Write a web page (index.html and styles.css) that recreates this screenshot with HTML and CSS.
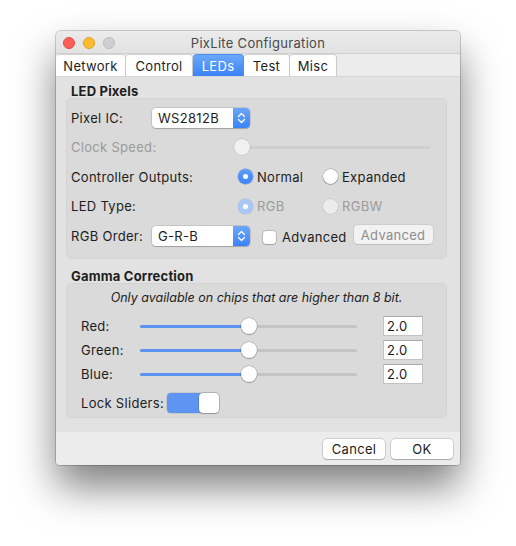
FILE: index.html
```html
<!DOCTYPE html>
<html>
<head>
<meta charset="utf-8">
<title>PixLite Configuration</title>
<link rel="stylesheet" href="styles.css">
</head>
<body>
<div class="window">
  <div class="titlebar">
    <div class="lights">
      <span class="light red"></span>
      <span class="light yellow"></span>
      <span class="light gray"></span>
    </div>
    <div class="title">PixLite Configuration</div>
    <div></div>
  </div>
  <div class="tabs">
    <div class="tab tab-network">Network</div>
    <div class="tab tab-control">Control</div>
    <div class="tab tab-leds active">LEDs</div>
    <div class="tab tab-test">Test</div>
    <div class="tab tab-misc">Misc</div>
  </div>
  <div class="content">
    <div class="group-title first">LED Pixels</div>
    <div class="box box-pixels">
      <div class="row">
        <div class="lbl lbl-short">Pixel IC:</div>
        <div class="popup"><span class="popup-text">WS2812B</span><span class="stepper"><svg width="17" height="20" viewBox="0 0 17 20"><path d="M5.5 8.5 L8.5 5.5 L11.5 8.5 M5.5 11.5 L8.5 14.5 L11.5 11.5" fill="none" stroke="#fff" stroke-width="1.3" stroke-linecap="round" stroke-linejoin="round"/></svg></span></div>
      </div>
      <div class="row">
        <div class="lbl lbl-clock disabled">Clock Speed:</div>
        <div class="slider slider-clock">
          <div class="track"></div>
          <div class="knob knob-disabled"></div>
        </div>
      </div>
      <div class="row">
        <div class="lbl lbl-long">Controller Outputs:</div>
        <div class="opt"><span class="radio on"></span><span>Normal</span></div>
        <div class="opt"><span class="radio"></span><span>Expanded</span></div>
      </div>
      <div class="row">
        <div class="lbl lbl-long">LED Type:</div>
        <div class="opt disabled"><span class="radio on dim"></span><span>RGB</span></div>
        <div class="opt disabled"><span class="radio dim"></span><span>RGBW</span></div>
      </div>
      <div class="row">
        <div class="lbl lbl-short">RGB Order:</div>
        <div class="popup"><span class="popup-text">G-R-B</span><span class="stepper"><svg width="17" height="20" viewBox="0 0 17 20"><path d="M5.5 8.5 L8.5 5.5 L11.5 8.5 M5.5 11.5 L8.5 14.5 L11.5 11.5" fill="none" stroke="#fff" stroke-width="1.3" stroke-linecap="round" stroke-linejoin="round"/></svg></span></div>
        <div class="check-wrap"><span class="checkbox"></span><span>Advanced</span></div>
        <div class="button button-disabled">Advanced</div>
      </div>
    </div>

    <div class="group-title second">Gamma Correction</div>
    <div class="box box-gamma">
      <div class="note">Only available on chips that are higher than 8 bit.</div>
      <div class="grow first-grow">
        <div class="glbl">Red:</div>
        <div class="slider slider-gamma">
          <div class="track"><div class="fill" style="width:50%"></div></div>
          <div class="knob" style="left:50%"></div>
        </div>
        <div class="field">2.0</div>
      </div>
      <div class="grow">
        <div class="glbl">Green:</div>
        <div class="slider slider-gamma">
          <div class="track"><div class="fill" style="width:50%"></div></div>
          <div class="knob" style="left:50%"></div>
        </div>
        <div class="field">2.0</div>
      </div>
      <div class="grow">
        <div class="glbl">Blue:</div>
        <div class="slider slider-gamma">
          <div class="track"><div class="fill" style="width:50%"></div></div>
          <div class="knob" style="left:50%"></div>
        </div>
        <div class="field">2.0</div>
      </div>
      <div class="lock-row">
        <div class="lock-lbl">Lock Sliders:</div>
        <div class="switch"><span class="switch-on"></span><span class="switch-knob"></span></div>
      </div>
    </div>
  </div>
  <div class="bottombar">
    <div class="button btn-cancel">Cancel</div>
    <div class="button btn-ok">OK</div>
  </div>
</div>
</body>
</html>
```

FILE: styles.css
```css
* { box-sizing: border-box; }
html, body { margin: 0; background: #fff; }
body {
  width: 516px;
  height: 546px;
  padding: 31px 0 0 56px;
  font-family: Inter, "Liberation Sans", sans-serif;
  font-size: 13px;
  letter-spacing: 0.3px;
  color: #1d1d1d;
  overflow: hidden;
}
.window {
  width: 404px;
  height: 434px;
  border-radius: 5px 5px 4px 4px;
  background: #ececec;
  box-shadow: 0 0 0 1px rgba(0,0,0,0.18), 0 22px 40px rgba(0,0,0,0.5);
  display: flex;
  flex-direction: column;
  overflow: hidden;
}
.titlebar {
  height: 23px;
  flex: none;
  display: grid;
  grid-template-columns: 1fr auto 1fr;
  align-items: center;
  padding-top: 1px;
  background: linear-gradient(#ebebeb, #e2e2e2);
  border-bottom: 1px solid #cfcfcf;
}
.lights { display: flex; gap: 8px; padding-left: 7px; }
.light { width: 12px; height: 12px; border-radius: 50%; }
.red { background: #fc5f57; border: 0.5px solid #de4a42; }
.yellow { background: #fdbc2e; border: 0.5px solid #dea123; }
.gray { background: #cfcfcf; border: 0.5px solid #bcbcbc; }
.title { color: #4a4a4a; font-size: 13px; }

.tabs {
  height: 23px;
  flex: none;
  display: flex;
  align-items: stretch;
  background: #ececec;
  border-bottom: 1px solid #d6d6d6;
}
.tab {
  background: #fff;
  display: flex;
  align-items: center;
  justify-content: center;
  padding-top: 1px;
  border-right: 1px solid #c9c9c9;
  border-top: 1px solid #d3d3d3;
  border-radius: 4px 4px 0 0;
  color: #1d1d1d;
}
.tab-network { width: 70px; }
.tab-control { width: 67px; }
.tab-leds { width: 51px; }
.tab-test { width: 46px; }
.tab-misc { width: 47px; }
.tab.active {
  background: linear-gradient(#6aa8fa, #3b83f6);
  color: #fff;
  border-color: #4b8ef4;
}

.content {
  flex: 1;
  background: #e2e2e2;
  padding: 0 13px 0 10px;
}
.group-title {
  font-weight: 700;
  line-height: 14px;
  height: 14px;
  padding-left: 5px;
  letter-spacing: 0.2px;
}
.group-title.first { margin-top: 7px; }
.group-title.second { margin-top: 10px; }
.box {
  background: #dadada;
  border: 1px solid #d3d3d3;
  border-radius: 5px;
}
.box-pixels {
  height: 161px;
  padding: 4px 4px 0 4px;
}
.row {
  height: 29.5px;
  display: flex;
  align-items: center;
}
.lbl { flex: none; }
.lbl-short { width: 81px; }
.lbl-clock { width: 163px; }
.lbl-long { width: 167px; }
.disabled { color: #9b9b9b; }

.popup {
  width: 98px;
  height: 20px;
  flex: none;
  background: #fff;
  border-radius: 4px;
  box-shadow: 0 0 0 0.5px rgba(0,0,0,0.2), 0 1px 1px rgba(0,0,0,0.18);
  display: flex;
  align-items: center;
  justify-content: space-between;
  overflow: hidden;
}
.popup-text { padding-left: 6px; }
.stepper {
  width: 17px;
  height: 20px;
  background: linear-gradient(#6ba7fa, #3a83f6);
  display: flex;
}

.slider { position: relative; height: 20px; }
.slider-clock { width: 196px; }
.track {
  position: absolute;
  left: 2px;
  right: 0;
  top: 8.5px;
  height: 3px;
  background: #c4c4c4;
  border-radius: 2px;
}
.slider-clock .track { background: #cfcfcf; }
.knob {
  position: absolute;
  top: 2px;
  width: 16px;
  height: 16px;
  margin-left: -8px;
  border-radius: 50%;
  background: #fff;
  box-shadow: 0 0 0 0.5px rgba(0,0,0,0.3), 0 1px 1px rgba(0,0,0,0.2);
}
.knob-disabled {
  left: 8px;
  background: #f1f1f1;
  box-shadow: 0 0 0 0.5px rgba(0,0,0,0.18);
}

.opt {
  width: 85px;
  flex: none;
  display: flex;
  align-items: center;
  gap: 4px;
}
.radio {
  width: 15px;
  height: 15px;
  border-radius: 50%;
  background: #fff;
  box-shadow: 0 0 0 0.5px rgba(0,0,0,0.28), 0 1px 1px rgba(0,0,0,0.15);
  position: relative;
  flex: none;
}
.radio.on { background: linear-gradient(#5d9ef8, #3b82f6); box-shadow: 0 0 0 0.5px rgba(40,100,220,0.6); }
.radio.on::after {
  content: "";
  position: absolute;
  left: 5px;
  top: 5px;
  width: 5px;
  height: 5px;
  border-radius: 50%;
  background: #fff;
}
.radio.dim { background: #ececec; box-shadow: 0 0 0 0.5px rgba(0,0,0,0.12); }
.radio.on.dim { background: #a9c8f5; box-shadow: 0 0 0 0.5px rgba(80,130,220,0.3); }

.check-wrap {
  display: flex;
  align-items: center;
  gap: 6px;
  margin-left: 13px;
  margin-top: 3px;
}
.checkbox {
  width: 13px;
  height: 13px;
  border-radius: 3px;
  background: #fff;
  box-shadow: 0 0 0 0.5px rgba(0,0,0,0.3), 0 1px 1px rgba(0,0,0,0.12);
}

.button {
  height: 20px;
  border-radius: 4px;
  background: #fff;
  box-shadow: 0 0 0 0.5px rgba(0,0,0,0.25), 0 1px 1px rgba(0,0,0,0.18);
  display: flex;
  align-items: center;
  justify-content: center;
}
.button-disabled {
  width: 79px;
  height: 19px;
  margin-left: 7px;
  margin-top: -2px;
  background: #f2f2f2;
  color: #8e8e8e;
  box-shadow: 0 0 0 0.5px rgba(0,0,0,0.12), 0 1px 1px rgba(0,0,0,0.08);
}

.box-gamma {
  height: 135px;
  padding: 7px 0 0 14px;
}
.note {
  font-style: italic;
  text-align: center;
  line-height: 14px;
  padding-right: 14px;
  letter-spacing: 0;
  font-size: 12.5px;
}
.grow {
  height: 24px;
  display: flex;
  align-items: center;
}
.grow.first-grow { margin-top: 9px; }
.glbl { width: 59px; flex: none; }
.slider-gamma { width: 217px; flex: none; }
.slider-gamma .track { left: 0; }
.fill {
  height: 100%;
  background: #5c92f0;
  border-radius: 2px;
}
.field {
  width: 40px;
  height: 20px;
  margin-left: 26px;
  background: #fff;
  border: 1px solid #c2c2c2;
  border-top-color: #a9a9a9;
  padding-left: 3px;
  line-height: 19px;
}
.lock-row {
  display: flex;
  align-items: center;
  gap: 3px;
  margin-top: 7px;
  height: 20px;
}
.switch {
  width: 52px;
  height: 20px;
  display: flex;
  border-radius: 4px;
  background: #5e95f2;
  box-shadow: 0 0 0 0.5px rgba(0,0,0,0.15);
}
.switch-on { flex: 1; }
.switch-knob {
  width: 20px;
  height: 20px;
  background: #fff;
  border-radius: 4px;
  box-shadow: 0 0 0 0.5px rgba(0,0,0,0.25), 0 1px 1px rgba(0,0,0,0.15);
}

.bottombar {
  height: 33px;
  flex: none;
  background: #ececec;
  display: flex;
  justify-content: flex-end;
  gap: 6px;
  padding: 7px 7px 0 0;
}
.btn-cancel, .btn-ok { width: 62px; }
```
